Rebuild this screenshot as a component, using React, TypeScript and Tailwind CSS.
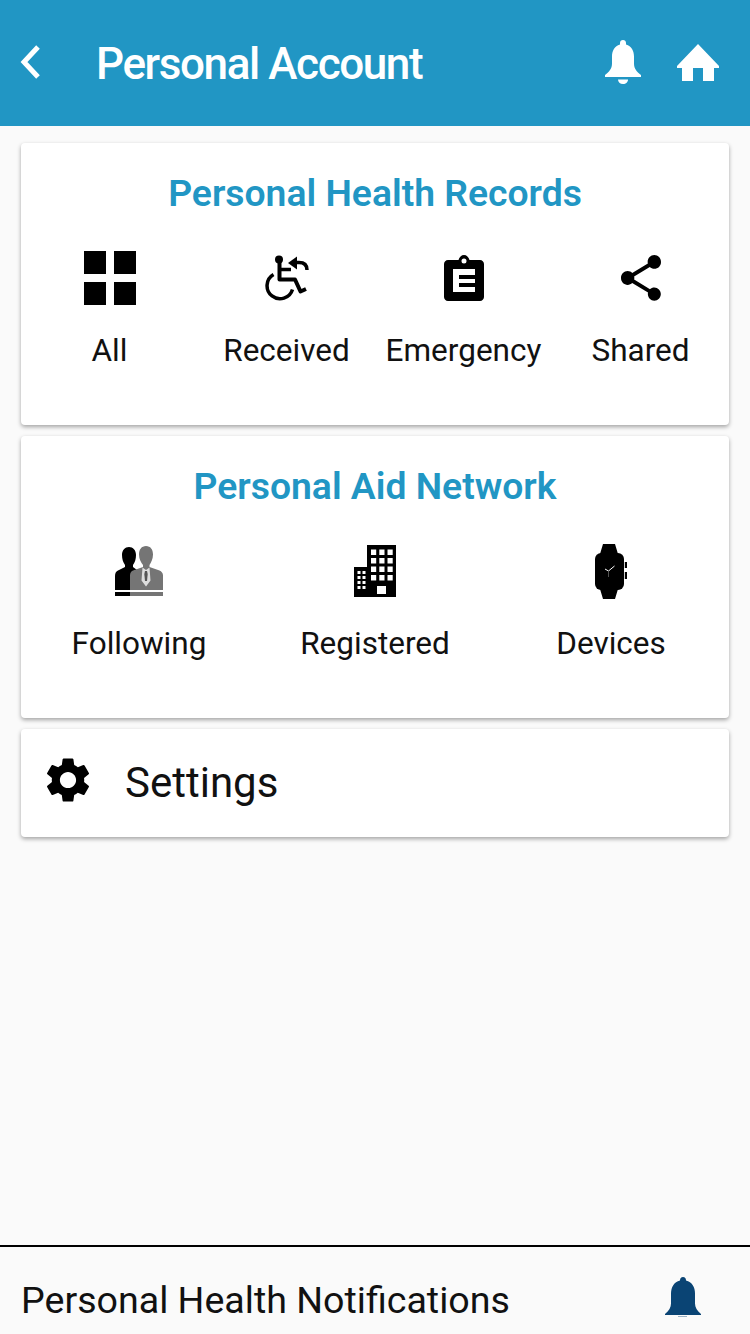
import React from 'react';

const font = { fontFamily: 'Roboto, sans-serif' };

function GridIcon() {
  return (
    <svg width="54" height="56" viewBox="0 0 54 56" fill="#000">
      <rect x="1" y="1" width="22" height="23" />
      <rect x="31" y="1" width="22" height="23" />
      <rect x="1" y="32" width="22" height="23" />
      <rect x="31" y="32" width="22" height="23" />
    </svg>
  );
}

function WheelchairBackIcon() {
  return (
    <svg width="45" height="46" viewBox="0 0 45 46" fill="none" stroke="#000">
      <circle cx="15" cy="4.500" r="4" fill="#000" stroke="none" />
      <path d="M15.500 6v18.500H31l5.500 12 5.500-2.500" strokeWidth="4" strokeLinejoin="round" />
      <path d="M15 14.500h12" strokeWidth="3.500" />
      <path d="M9.500 19.500a13 13 0 1 0 19 15" strokeWidth="3.500" />
      <path d="M43 15c0-5-3-7.500-8-7.500h-4" strokeWidth="3.500" />
      <path d="M33 1.500L24 8l9 6.500z" fill="#000" stroke="none" />
    </svg>
  );
}

function ClipboardIcon() {
  return (
    <svg width="40" height="46" viewBox="0 0 40 46">
      <path
        fillRule="evenodd"
        d="M4 5h10.500C15.300 2 17.400 0 20 0s4.700 2 5.500 5H36c2.200 0 4 1.800 4 4v33c0 2.200-1.800 4-4 4H4c-2.200 0-4-1.800-4-4V9c0-2.200 1.800-4 4-4zm16-1.500a2.500 2.500 0 1 0 0 5 2.500 2.500 0 0 0 0-5z"
        fill="#000"
      />
      <path d="M9 14h22v6H15v4h16v4H15v4h16v5H9z" fill="#fff" />
    </svg>
  );
}

function ShareIcon() {
  return (
    <svg width="40" height="46" viewBox="3 2 18 20" preserveAspectRatio="none">
      <path
        d="M18 16.080c-.76 0-1.440.3-1.960.77L8.910 12.700c.05-.23.09-.46.09-.7s-.04-.47-.09-.7l7.050-4.110c.54.5 1.250.81 2.040.81 1.660 0 3-1.340 3-3s-1.340-3-3-3-3 1.340-3 3c0 .24.04.47.09.7L8.040 9.810C7.500 9.310 6.790 9 6 9c-1.660 0-3 1.340-3 3s1.340 3 3 3c.79 0 1.500-.31 2.040-.81l7.120 4.160c-.05.21-.08.43-.08.65 0 1.610 1.310 2.920 2.920 2.920 1.610 0 2.920-1.310 2.920-2.920s-1.310-2.920-2.920-2.920z"
        fill="#000"
      />
    </svg>
  );
}

function PeopleIcon() {
  return (
    <svg width="49" height="50" viewBox="0 0 49 50">
      <path d="M14 1c4 0 7 3 7 8 0 4-1 7-3 10v2l4 3-5 3v23H0V30c0-3 1-5 4-6l6-3v-2c-2-3-3-6-3-10 0-5 3-8 7-8z" fill="#000" />
      <path d="M31 0c4.500 0 7 3.500 7 8.500 0 4.500-2 8-3.500 10.500v2l10 3.500c2 1 3.500 2.500 3.500 5V50H15V29.500c0-2.500 1-4 3-5l10-3.500v-2C26 16.500 24 13 24 8.500 24 3.500 26.500 0 31 0z" fill="#757575" />
      <path d="M27.500 21.500L31 24l3.500-2.500 1 13-4.500 6-4.500-6z" fill="#ddd" />
      <path d="M30 25h2l.7 3-.7 7h-2l-.7-7z" fill="#555" />
      <path d="M0 44h49v2H0z" fill="#fff" />
    </svg>
  );
}

function BuildingIcon() {
  const big = [4.500, 13, 21.500, 30].flatMap(y => [17, 25.300, 33.500].map(x => [x, y]));
  const small = [26, 31, 36, 41].flatMap(y => [3.500, 8.500].map(x => [x, y]));
  return (
    <svg width="42" height="52" viewBox="0 0 42 52">
      <path d="M13 0h29v52H0V22h13z" fill="#000" />
      {big.map(([x, y]) => (
        <rect key={`b${x}-${y}`} x={x} y={y} width="5.200" height="5.500" fill="#fff" />
      ))}
      {small.map(([x, y]) => (
        <rect key={`s${x}-${y}`} x={x} y={y} width="3" height="3" fill="#fff" />
      ))}
      <rect x="23" y="41" width="9" height="8" fill="#fff" />
    </svg>
  );
}

function WatchIcon() {
  return (
    <svg width="32" height="55" viewBox="0 0 32 55">
      <path d="M8 0h12l3 10H5zM5 45h18l-3 10H8z" fill="#000" />
      <rect x="0" y="9" width="29" height="37" rx="6" fill="#000" />
      <rect x="29.800" y="18" width="2.200" height="6" fill="#000" />
      <rect x="29.800" y="28" width="2.200" height="7" fill="#000" />
      <path d="M10 25l3.500 2 6-5" stroke="#fff" strokeWidth="1" fill="none" />
      <path d="M13.500 27v6" stroke="#666" strokeWidth="0.800" />
    </svg>
  );
}

function BellIcon() {
  return (
    <svg width="36" height="44" viewBox="0 0 36 44" fill="#fff">
      <path d="M18 0c1.800 0 3 1.300 3 3v1.500c5.500 1.500 8 6.500 8 12v7c0 5 2.500 8 7 11.500v2H0v-2c4.500-3.500 7-6.500 7-11.500v-7c0-5.500 2.500-10.500 8-12V3c0-1.700 1.200-3 3-3z" />
      <path d="M13 39.500h10c0 2.500-2 4.500-5 4.500s-5-2-5-4.500z" />
    </svg>
  );
}

function SolidBellIcon() {
  return (
    <svg className="mb-[6px]" width="36" height="40" viewBox="0 0 36 40" fill="#0a4474">
      <path d="M18 0c2 0 3 1.500 3 3.500 6 1.500 9 6.500 9 13v10c0 4 2 7 6 10.500V38H0v-1c4-3.500 6-6.500 6-10.500v-10c0-6.500 3-11.500 9-13C15 1.500 16 0 18 0z" />
      <rect x="13" y="39" width="9" height="0.800" opacity="0.5" />
    </svg>
  );
}

function HomeIcon() {
  return (
    <svg width="42" height="37" viewBox="0 0 42 37" fill="#fff">
      <path d="M21 0l21 22v2h-5v13H26V24h-10v13H5V24H0v-2z" />
    </svg>
  );
}

function Tile({ icon, label }: { icon: React.ReactNode; label: string }) {
  return (
    <div className="flex flex-col items-center">
      <div className="flex h-[56px] items-center justify-center">{icon}</div>
      <span className="mt-[27px] text-[31.500px] leading-[36px] text-[#111]">{label}</span>
    </div>
  );
}

function Card({ title, cols, children }: { title: string; cols: string; children: React.ReactNode }) {
  return (
    <section className="mx-[21px] h-[282px] rounded-[4px] bg-white pt-[28px] shadow-[0_2px_4px_rgba(0,0,0,0.35)]">
      <h2 className="text-center text-[37.300px] leading-[44px] font-semibold text-[#2196c4]">{title}</h2>
      <div className={`mt-[35px] grid ${cols}`}>{children}</div>
    </section>
  );
}

export default function App() {
  return (
    <div className="flex h-[1334px] flex-col overflow-hidden bg-[#fafafa]" style={font}>
      {/* Header */}
      <header className="flex h-[126px] shrink-0 items-center bg-[#2196c4] pb-[2px]">
        <svg className="ml-[20px]" width="22" height="34" viewBox="0 0 22 34" fill="none" stroke="#fff" strokeWidth="5">
          <path d="M18 2L4 17l14 15" />
        </svg>
        <h1 className="ml-[54px] flex-1 pt-[3px] text-[44px] leading-[50px] font-medium tracking-[-1.400px] text-white">Personal Account</h1>
        <div className="mr-[31px] flex items-center gap-[36px]">
          <BellIcon />
          <HomeIcon />
        </div>
      </header>

      <main className="flex flex-1 flex-col gap-[11px] pt-[17px]">
        <Card title="Personal Health Records" cols="grid-cols-4">
          <Tile icon={<GridIcon />} label="All" />
          <Tile icon={<WheelchairBackIcon />} label="Received" />
          <Tile icon={<ClipboardIcon />} label="Emergency" />
          <Tile icon={<ShareIcon />} label="Shared" />
        </Card>
        <Card title="Personal Aid Network" cols="grid-cols-3">
          <Tile icon={<PeopleIcon />} label="Following" />
          <Tile icon={<BuildingIcon />} label="Registered" />
          <Tile icon={<WatchIcon />} label="Devices" />
        </Card>
        <section className="mx-[21px] flex h-[108px] items-center rounded-[4px] bg-white pl-[20px] shadow-[0_2px_4px_rgba(0,0,0,0.35)]">
          <svg className="mb-[6px]" width="54" height="54" viewBox="0 0 24 24" fill="#000">
            <path d="M19.140 12.940c.04-.3.06-.61.06-.94 0-.32-.02-.64-.07-.94l2.030-1.580c.18-.14.23-.41.12-.61l-1.920-3.320c-.12-.22-.37-.29-.59-.22l-2.390.96c-.5-.38-1.030-.7-1.620-.94l-.36-2.540c-.04-.24-.24-.41-.48-.41h-3.840c-.24 0-.43.17-.47.41l-.36 2.540c-.59.24-1.130.57-1.620.94l-2.390-.96c-.22-.08-.47 0-.59.22L2.740 8.870c-.12.21-.08.47.12.61l2.030 1.580c-.05.3-.09.63-.09.94s.02.64.07.94l-2.030 1.580c-.18.14-.23.41-.12.61l1.920 3.320c.12.22.37.29.59.22l2.390-.96c.5.38 1.030.7 1.620.94l.36 2.540c.05.24.24.41.48.41h3.840c.24 0 .44-.17.47-.41l.36-2.540c.59-.24 1.130-.56 1.620-.94l2.390.96c.22.08.47 0 .59-.22l1.920-3.320c.12-.22.07-.47-.12-.61l-2.010-1.580zM12 15.600c-1.980 0-3.600-1.620-3.600-3.600s1.620-3.600 3.600-3.600 3.600 1.620 3.600 3.600-1.620 3.600-3.600 3.600z" />
          </svg>
          <span className="ml-[30px] text-[42px] leading-[50px] text-[#111]">Settings</span>
        </section>
      </main>

      {/* Bottom notification bar */}
      <footer className="flex h-[89px] shrink-0 items-center justify-between border-t-2 border-black pt-[19px] pr-[49px] pl-[21px]">
        <span className="text-[37.600px] leading-[46px] text-[#111]">Personal Health Notifications</span>
        <SolidBellIcon />
      </footer>
    </div>
  );
}
